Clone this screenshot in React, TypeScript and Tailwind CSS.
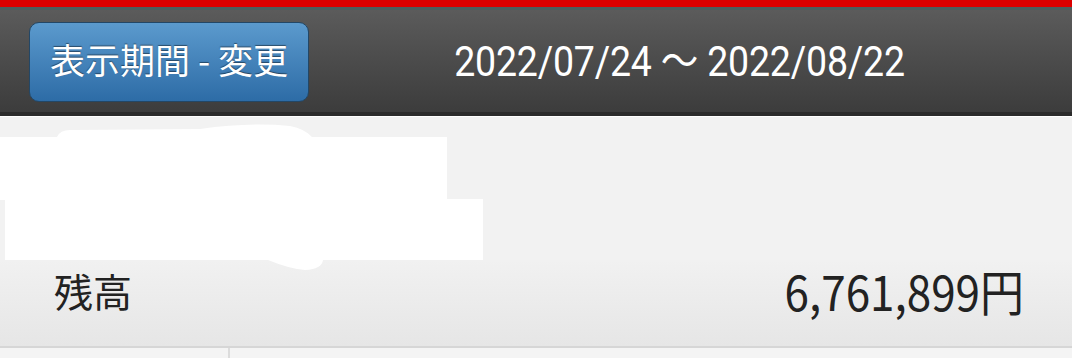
// App.tsx - balance period header

const jp = "font-['Noto_Sans_CJK_JP','Noto_Sans',sans-serif]";

function Redaction() {
  // white scribble that hides the account name
  return (
    <svg
      className="absolute left-0 top-0"
      width="540"
      height="160"
      viewBox="0 0 540 160"
    >
      <path
        d="M0 20 L57 20 Q60 13 70 13 L200 12 Q250 5 290 9 Q305 12 312 20 L447 20 L447 82 L483 82 L483 143 L323 143 Q322 152 305 153 Q290 152 268 143 L5 143 L5 83 L0 83 Z"
        fill="#ffffff"
      />
    </svg>
  );
}

export default function App() {
  return (
    <div className="w-[1072px] h-[358px] overflow-hidden bg-[#f2f2f2]">
      {/* top red strip */}
      <div className="h-[7px] bg-[#dc0000]" />

      {/* period header */}
      <div className="h-[109px] flex flex-col bg-gradient-to-b from-[#5c5c5c] to-[#3b3b3b]">
        <div className="h-[3px] bg-[#4d5e5e]" />
        <div className="flex-1 flex items-center pl-[29px] pt-[2px]">
          <button
            className={`w-[280px] h-[80px] pb-[6px] rounded-[10px] border border-[#234766] bg-gradient-to-b from-[#5b9acd] to-[#2d6ca6] text-white text-[35px] [text-shadow:0_-1px_1px_rgba(0,0,0,0.45)] ${jp}`}
          >
            表示期間 - 変更
          </button>
          <div className="flex-1 flex justify-center pr-[22px] pb-[2px]">
            <span className="inline-block text-white text-[37.5px] tracking-[-0.2px] font-['Roboto','Noto_Sans_CJK_JP',sans-serif] scale-y-[1.12]">
              2022/07/24 〜 2022/08/22
            </span>
          </div>
        </div>
        <div className="h-[4px] bg-[#2b2b2b]" />
      </div>

      {/* account name area (hidden) */}
      <div className="relative h-[144px] border-t border-white bg-[#f2f2f2]">
        <Redaction />
      </div>

      {/* balance row */}
      <div className="h-[88px] flex items-center justify-between pl-[54px] pr-[48px] pb-[26px] bg-gradient-to-b from-[#f1f1f1] to-[#e6e6e6] border-b-2 border-[#d6d6d6]">
        <span className={`text-[39px] text-[#222] ${jp}`}>残高</span>
        <span className={`inline-block text-[44px] text-[#222] scale-y-[1.1] ${jp}`}>
          6,761,899円
        </span>
      </div>

      {/* next row */}
      <div className="flex h-[10px] bg-[#f4f4f4]">
        <div className="w-[230px] border-r-2 border-[#dcdcdc]" />
        <div className="flex-1" />
      </div>
    </div>
  );
}
